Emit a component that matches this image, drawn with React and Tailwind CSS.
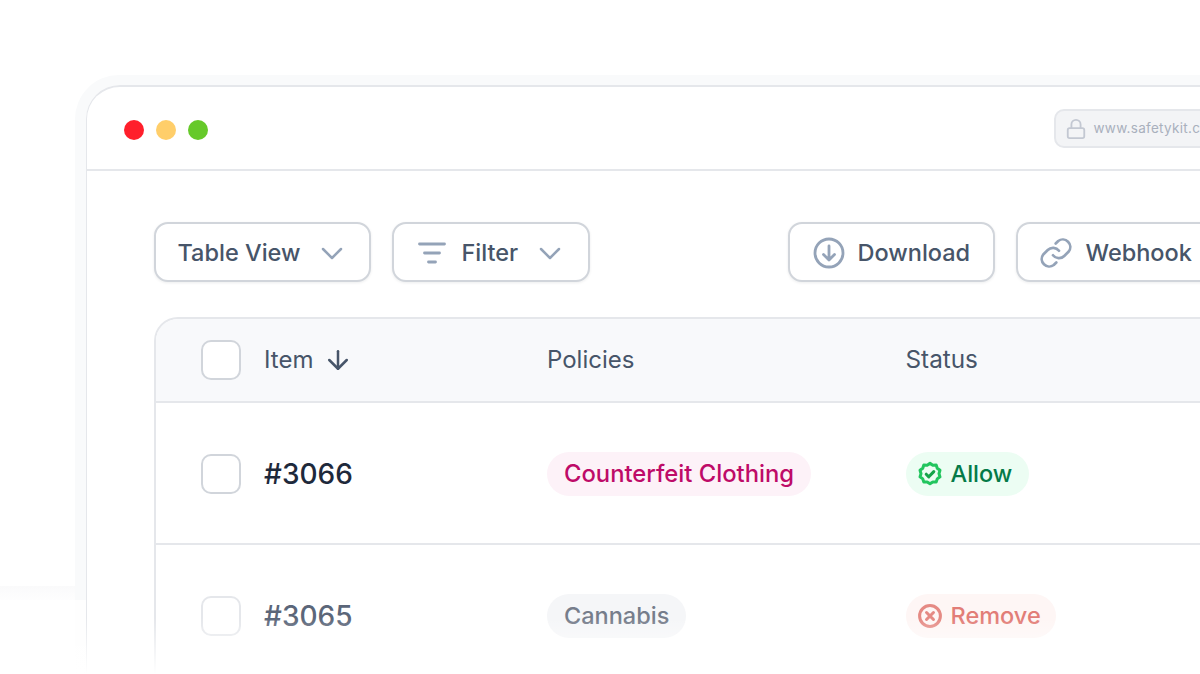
import React from "react";
import { Lock, ArrowDown } from "lucide-react";

function Btn({ children, className = "" }) {
  return (
    <div className={"flex h-[60px] shrink-0 items-center rounded-[14px] border-2 border-[#d1d5db] bg-white pt-[2px] text-[23.5px] font-medium text-[#475569] shadow-[0_1px_3px_rgba(16,24,40,0.08)] " + className}>
      {children}
    </div>
  );
}

function Chevron({ className = "" }) {
  return (
    <svg width="22" height="13" viewBox="0 0 22 13" fill="none" stroke="#94a3b8" strokeWidth="2.5" strokeLinecap="round" strokeLinejoin="round" className={className}>
      <path d="M2 2l9 9 9-9" />
    </svg>
  );
}

function Check({ faded }) {
  return <div className={"h-10 w-10 shrink-0 rounded-[10px] border-2 bg-white " + (faded ? "border-[#e5e7eb]" : "border-[#d1d5db]")} />;
}

function Allow() {
  return (
    <svg width="26" height="26" viewBox="0 0 24 24" fill="none" stroke="#22c55e" strokeWidth="2.800" strokeLinecap="round" strokeLinejoin="round">
      <path d="M12 2.200l2.600 1.700 3.100-.1 1 2.900 2.500 1.900-.9 3 .9 3-2.500 1.900-1 2.900-3.100-.1-2.600 1.700-2.600-1.700-3.100.1-1-2.900-2.500-1.900.9-3-.9-3 2.500-1.900 1-2.900 3.100.1z" />
      <path d="M8.500 12.200l2.400 2.400 4.600-4.800" stroke="#16a34a" />
    </svg>
  );
}

function Remove() {
  return (
    <svg width="26" height="26" viewBox="0 0 24 24" fill="none" stroke="#e58a84" strokeWidth="2.800" strokeLinecap="round">
      <circle cx="12" cy="12" r="9.600" />
      <path d="M8.800 8.800l6.400 6.400M15.200 8.800l-6.400 6.400" />
    </svg>
  );
}

export default function App() {
  return (
    <div className="relative h-[674px] w-[1200px] overflow-hidden bg-white font-['Inter',sans-serif]">
      <div className="ml-[75px] mt-[75px] h-[700px] w-[1300px] rounded-tl-[44px] border-l-[11px] border-t-[10px] border-[#f9fafb]">
        <div className="h-full rounded-tl-[34px] border-l-[1.5px] border-t-2 border-[#e5e7eb] bg-white">
          <div className="flex h-[84px] items-center border-b-2 border-[#e5e7eb] pl-[36.5px] pr-[100px]">
            <div className="mt-[4px] flex gap-[12.25px]">
              <div className="h-5 w-5 rounded-full bg-[#ff1f2b]" />
              <div className="h-5 w-5 rounded-full bg-[#ffce6a]" />
              <div className="h-5 w-5 rounded-full bg-[#66c92a]" />
            </div>
            <div className="ml-[845.5px] mt-[1px] flex h-[39px] w-[300px] shrink-0 items-center gap-[7px] rounded-[10px] border-2 border-[#e5e7eb] bg-[#f3f4f6] pl-[9px] text-[13.5px] tracking-[0.3px] text-[#a9b0bd]">
              <Lock size={22} strokeWidth={2} className="text-[#c3c8d2]" />
              <span>www.safetykit.com</span>
            </div>
          </div>

          <div className="pl-[66.5px] pt-[51px]">
            <div className="flex items-center">
              <Btn className="w-[217px] pl-[22px]">
                <span>Table View</span>
                <Chevron className="ml-[21px]" />
              </Btn>
              <Btn className="ml-[21px] w-[198px] pl-[24px]">
                <svg width="28" height="24" viewBox="0 0 28 24" fill="none" stroke="#94a3b8" strokeWidth="2.800" strokeLinecap="round">
                  <path d="M1.500 3h25M6.500 12h15M10.500 21h7" />
                </svg>
                <span className="ml-[16px]">Filter</span>
                <Chevron className="ml-[21px]" />
              </Btn>
              <Btn className="ml-[198px] w-[207px] pl-[23px]">
                <svg width="32" height="32" viewBox="0 0 32 32" fill="none" stroke="#94a3b8" strokeWidth="2.800" strokeLinecap="round" strokeLinejoin="round">
                  <circle cx="16" cy="16" r="14" />
                  <path d="M16 9v14M10.500 17.500L16 23l5.500-5.500" />
                </svg>
                <span className="ml-[13px]">Download</span>
              </Btn>
              <Btn className="ml-[21px] w-[260px] pl-[20px]">
                <svg width="36" height="36" viewBox="0 0 24 24" fill="none" stroke="#94a3b8" strokeWidth="1.800" strokeLinecap="round" strokeLinejoin="round">
                  <path d="M10 13.500a5 5 0 0 0 7.500.5l3-3a5 5 0 0 0-7-7l-1.700 1.700" />
                  <path d="M14 10.500a5 5 0 0 0-7.500-.5l-3 3a5 5 0 0 0 7 7l1.700-1.700" />
                </svg>
                <span className="ml-[12px]">Webhook</span>
              </Btn>
            </div>

            <div className="mt-[35px] w-[1200px] rounded-tl-[24px] border-l-2 border-t-2 border-[#e5e7eb]">
              <div className="grid h-[84px] grid-cols-[391.5px_358.5px_1fr] items-center rounded-tl-[22px] border-b-2 border-[#e5e7eb] bg-[#f8f9fb] text-[24px] text-[#475569]">
                <div className="flex items-center pl-[45px]">
                  <Check />
                  <span className="ml-[23.5px] mb-[1px]">Item</span>
                  <ArrowDown size={30} strokeWidth={2} className="ml-[10px] text-[#475569]" />
                </div>
                <div className="mb-[1px]">Policies</div>
                <div className="mb-[1px] text-[24.3px]">Status</div>
              </div>

              <div className="grid h-[142px] grid-cols-[391.5px_358.5px_1fr] items-center border-b-2 border-[#e5e7eb] pt-[2px]">
                <div className="flex items-center pl-[45px]">
                  <Check />
                  <span className="ml-[23.5px] text-[28px] font-medium text-[#1e293b]">#3066</span>
                </div>
                <div>
                  <span className="inline-flex h-11 items-center rounded-full bg-[#fdf2f8] px-[17px] text-[23.8px] font-medium text-[#be0b68]">Counterfeit Clothing</span>
                </div>
                <div>
                  <span className="inline-flex h-11 items-center gap-[8px] rounded-full bg-[#ecfdf3] pl-[11px] pr-[17px] text-[23.5px] font-medium text-[#047a48]">
                    <Allow />
                    Allow
                  </span>
                </div>
              </div>

              <div className="grid h-[142px] grid-cols-[391.5px_358.5px_1fr] items-center">
                <div className="flex items-center pl-[45px]">
                  <Check faded />
                  <span className="ml-[23.5px] text-[28px] font-medium text-[#5b6679]">#3065</span>
                </div>
                <div>
                  <span className="inline-flex h-11 items-center rounded-full bg-[#f5f6f8] px-[17px] text-[23.5px] font-medium text-[#767d8b]">Cannabis</span>
                </div>
                <div>
                  <span className="inline-flex h-11 items-center gap-[8px] rounded-full bg-[#fef6f5] pl-[11px] pr-[15px] text-[23.5px] font-medium text-[#e27d77]">
                    <Remove />
                    Remove
                  </span>
                </div>
              </div>
            </div>
          </div>
        </div>
      </div>
      <div className="absolute left-0 top-[586px] h-[20px] w-[75px] bg-gradient-to-b from-[#fafafb] to-white" />
      <div className="absolute bottom-0 left-0 top-[600px] w-[86px] bg-white/80" />
      <div className="absolute inset-x-0 bottom-0 h-[56px] bg-gradient-to-b from-white/0 to-white" />
    </div>
  );
}
